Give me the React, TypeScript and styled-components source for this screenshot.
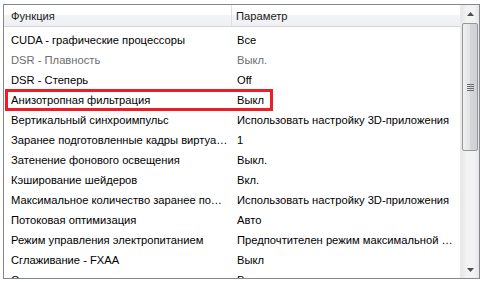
import React from 'react';
import styled, { createGlobalStyle } from 'styled-components';

type Setting = {
  name: string;
  value: string;
  disabled?: boolean;
  marked?: boolean;
};

const settings: Setting[] = [
  { name: 'CUDA - графические процессоры', value: 'Все' },
  { name: 'DSR - Плавность', value: 'Выкл.', disabled: true },
  { name: 'DSR - Степерь', value: 'Off' },
  { name: 'Анизотропная фильтрация', value: 'Выкл', marked: true },
  { name: 'Вертикальный синхроимпульс', value: 'Использовать настройку 3D-приложения' },
  { name: 'Заранее подготовленные кадры виртуальной реальности', value: '1' },
  { name: 'Затенение фонового освещения', value: 'Выкл.' },
  { name: 'Кэширование шейдеров', value: 'Вкл.' },
  { name: 'Максимальное количество заранее подготовленных кадров', value: 'Использовать настройку 3D-приложения' },
  { name: 'Потоковая оптимизация', value: 'Авто' },
  { name: 'Режим управления электропитанием', value: 'Предпочтителен режим максимальной производительности' },
  { name: 'Сглаживание - FXAA', value: 'Выкл' },
  { name: 'Сглаживание - гамма-коррекция', value: 'Вкл' },
];

const GlobalStyle = createGlobalStyle`
  html, body {
    margin: 0;
    background: #ffffff;
  }
  body {
    font-family: "Liberation Sans", Arial, sans-serif;
    font-size: 11.2px;
    color: #000;
  }
`;

const Frame = styled.div`
  margin: 4px 0 0 3px;
  width: 475px;
  height: 273px;
  border: 1px solid #828790;
  display: flex;
  overflow: hidden;
`;

const List = styled.div`
  width: 457px;
  display: flex;
  flex-direction: column;
  overflow: hidden;
`;

const Header = styled.div`
  display: grid;
  grid-template-columns: 228px 1fr;
  height: 21px;
  flex: none;
  background: linear-gradient(#ffffff, #ffffff 45%, #f3f4f6 46%, #eef0f3);
  border-bottom: 1px solid #d5d5d5;
`;

const HeadCell = styled.div<{ $first?: boolean }>`
  display: flex;
  align-items: center;
  padding-left: ${p => (p.$first ? '7px' : '4px')};
  border-right: 1px solid ${p => (p.$first ? '#dee0e4' : 'transparent')};
  color: #1b1b1b;
`;

const Body = styled.div`
  padding-top: 3px;
  display: flex;
  flex-direction: column;
`;

const Row = styled.div<{ $disabled?: boolean }>`
  position: relative;
  display: grid;
  grid-template-columns: 229px 1fr;
  height: 20px;
  flex: none;
  align-items: center;
  color: ${p => (p.$disabled ? '#6d6d6d' : '#000')};
`;

const Cell = styled.div<{ $first?: boolean }>`
  padding-left: ${p => (p.$first ? '7px' : '4px')};
  padding-right: 5px;
  white-space: nowrap;
  overflow: hidden;
  text-overflow: ellipsis;
`;

const Marker = styled.div`
  position: absolute;
  left: 1px;
  top: -1px;
  width: 262px;
  height: 16px;
  border: 3px solid #ee1c25;
  pointer-events: none;
`;

const ScrollBar = styled.div`
  width: 18px;
  display: flex;
  flex-direction: column;
  background: linear-gradient(90deg, #e6e6e6, #f2f2f2 30%, #f2f2f2 70%, #e6e6e6);
  border-left: 1px solid #eaeaea;
`;

const ArrowButton = styled.div`
  height: 17px;
  flex: none;
  display: flex;
  align-items: center;
  justify-content: center;
`;

const Thumb = styled.div`
  margin: 1px 1px 0 1px;
  height: 126px;
  flex: none;
  border: 1px solid #979797;
  border-radius: 2px;
  background: linear-gradient(90deg, #f0f0f0, #e2e3e5 50%, #d4d6d8 51%, #cfd0d3);
  display: flex;
  align-items: center;
  justify-content: center;
`;

const Spacer = styled.div`
  flex: 1;
`;

const Arrow = ({ down }: { down?: boolean }) => (
  <svg width="7" height="4" viewBox="0 0 7 4">
    <path d={down ? 'M0 0H7L3.5 4Z' : 'M3.5 0L7 4H0Z'} fill="#4d4d4d" />
  </svg>
);

const Grip = () => (
  <svg width="7" height="7" viewBox="0 0 7 7">
    {[0, 2, 4, 6].map(y => (
      <rect key={y} x="0" y={y} width="7" height="1" fill="#6b6b6b" />
    ))}
  </svg>
);

export default function App() {
  return (
    <>
      <GlobalStyle />
      <Frame>
        <List>
          <Header>
            <HeadCell $first>Функция</HeadCell>
            <HeadCell>Параметр</HeadCell>
          </Header>
          <Body>
            {settings.map(s => (
              <Row key={s.name} $disabled={s.disabled}>
                <Cell $first>{s.name}</Cell>
                <Cell>{s.value}</Cell>
                {s.marked && <Marker />}
              </Row>
            ))}
          </Body>
        </List>
        <ScrollBar>
          <ArrowButton>
            <Arrow />
          </ArrowButton>
          <Thumb>
            <Grip />
          </Thumb>
          <Spacer />
          <ArrowButton>
            <Arrow down />
          </ArrowButton>
        </ScrollBar>
      </Frame>
    </>
  );
}
